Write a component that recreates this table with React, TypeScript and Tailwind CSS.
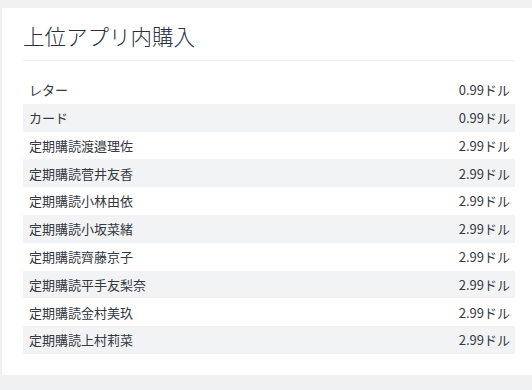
const items = [
  { name: "レター", price: "0.99ドル" },
  { name: "カード", price: "0.99ドル" },
  { name: "定期購読渡邉理佐", price: "2.99ドル" },
  { name: "定期購読菅井友香", price: "2.99ドル" },
  { name: "定期購読小林由依", price: "2.99ドル" },
  { name: "定期購読小坂菜緒", price: "2.99ドル" },
  { name: "定期購読齊藤京子", price: "2.99ドル" },
  { name: "定期購読平手友梨奈", price: "2.99ドル" },
  { name: "定期購読金村美玖", price: "2.99ドル" },
  { name: "定期購読上村莉菜", price: "2.99ドル" },
];

export default function App() {
  return (
    <div
      className="h-[390px] w-[532px] bg-[#f0f1f3] pt-2 pl-[2px]"
      style={{ fontFamily: '"Noto Sans CJK JP", "Noto Sans", sans-serif' }}
    >
      <div className="bg-white pl-[21px] pr-[17px] pt-[13px] pb-[21px]">
        <h2 className="border-b border-[#eceef1] pb-[9px] text-[21.5px] leading-[30px] font-light text-[#283042]">
          上位アプリ内購入
        </h2>
        <div className="mt-[15px]">
          {items.map((item, i) => (
            <div
              key={item.name}
              className={`flex h-[27.8px] items-center justify-between pl-[6px] pr-[5px] text-[13px] text-[#333842] ${
                i % 2 === 1 ? "bg-[#f2f3f5]" : "bg-white"
              }`}
            >
              <span>{item.name}</span>
              <span>{item.price}</span>
            </div>
          ))}
        </div>
      </div>
    </div>
  );
}
